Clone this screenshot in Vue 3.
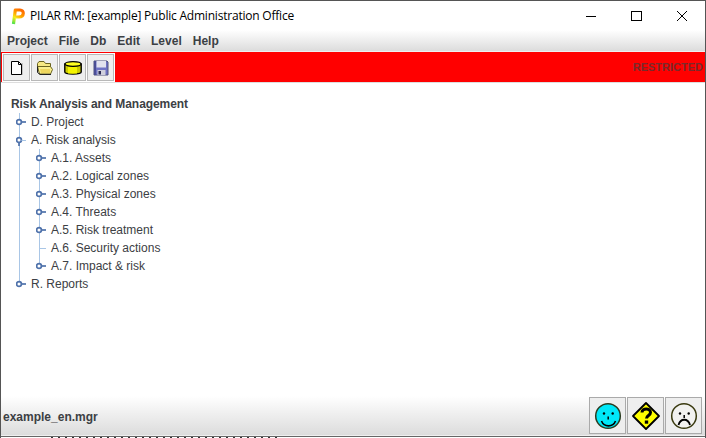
<script setup>
const assets = [
  { label: 'A.1. Assets', handle: true },
  { label: 'A.2. Logical zones', handle: true },
  { label: 'A.3. Physical zones', handle: true },
  { label: 'A.4. Threats', handle: true },
  { label: 'A.5. Risk treatment', handle: true },
  { label: 'A.6. Security actions', handle: false },
  { label: 'A.7. Impact & risk', handle: true }
]
const menus = ['Project', 'File', 'Db', 'Edit', 'Level', 'Help']
</script>

<template>
  <div class="window">
    <header class="titlebar">
      <svg class="logo" width="16" height="18" viewBox="0 0 16 18">
        <defs>
          <linearGradient id="pg" gradientUnits="userSpaceOnUse" x1="11" y1="3" x2="3" y2="17">
            <stop offset="0" stop-color="#ff6a00" />
            <stop offset="0.35" stop-color="#ffa800" />
            <stop offset="0.6" stop-color="#f4ec1c" />
            <stop offset="1" stop-color="#40e050" />
          </linearGradient>
        </defs>
        <path d="M3.500 17 L5.300 3 L10 3 C14.500 3 14.500 10 9 10 L6 10" fill="none" stroke="url(#pg)" stroke-width="3.200" stroke-linejoin="round" />
      </svg>
      <span class="title">PILAR RM: [example] Public Administration Office</span>
      <div class="controls">
        <svg width="46" height="30" viewBox="0 0 46 30"><path d="M19 15.500h10" stroke="#000" fill="none" /></svg>
        <svg width="46" height="30" viewBox="0 0 46 30"><rect x="18.500" y="10.500" width="10" height="9" stroke="#000" fill="none" /></svg>
        <svg width="46" height="30" viewBox="0 0 46 30"><path d="M18 10 L28 20 M28 10 L18 20" stroke="#000" fill="none" /></svg>
      </div>
    </header>

    <nav class="menubar">
      <span v-for="m in menus" :key="m" class="menu">{{ m }}</span>
    </nav>

    <div class="toolbar">
      <div class="tools">
        <button class="tool">
          <svg width="16" height="18" viewBox="0 0 16 18">
            <path d="M4 4h10v12H4z" fill="#c4c4c4" />
            <path d="M2.500 2.500h7l3 3v10h-10z" fill="#fff" stroke="#000" />
            <path d="M9.500 2.500v3h3" fill="none" stroke="#000" />
          </svg>
        </button>
        <button class="tool">
          <svg width="18" height="16" viewBox="0 0 18 16">
            <path d="M1.500 3.500l1.500-2h5l1.500 2h5v4h-13z" fill="#f6e884" stroke="#6a6420" />
            <path d="M1.500 6.500h13l2 3-2 4.500h-11z" fill="#f9ee8c" stroke="#6a6420" />
            <path d="M4 9h10v4H5z" fill="#eed65e" />
            <path d="M1.500 6.500v6l2.500 2h11" fill="none" stroke="#222" />
          </svg>
        </button>
        <button class="tool">
          <svg width="18" height="14" viewBox="0 0 18 14">
            <path d="M.800 3v8c0 1 3 2 8.200 2s8.200-1 8.200-2V3z" fill="#cccc00" stroke="#000" stroke-width="1.400" />
            <path d="M4 6v6.500l5 .300 4-.300V6z" fill="#f4f400" />
            <ellipse cx="9" cy="3" rx="8" ry="2.300" fill="#ffff20" stroke="#000" stroke-width="1.200" />
          </svg>
        </button>
        <button class="tool">
          <svg width="16" height="16" viewBox="0 0 16 16">
            <path d="M1 1h13l1 1v13H1z" fill="#6f72c4" stroke="#50527e" />
            <path d="M1 1h2v14H1z" fill="#4b4e94" />
            <rect x="3.500" y="1" width="9.500" height="6.500" fill="#e2e2ee" />
            <rect x="4.500" y="10" width="8" height="5" fill="#cfcfdc" />
            <rect x="5.500" y="11" width="2.500" height="3.500" fill="#2b2b55" />
          </svg>
        </button>
      </div>
      <span class="restricted">RESTRICTED</span>
    </div>

    <main class="tree">
      <div class="row root">Risk Analysis and Management</div>
      <div class="branch outer">
        <div class="row">
          <svg class="handle" width="10" height="8" viewBox="0 0 10 8"><circle cx="3" cy="4" r="2.400" fill="#fff" stroke="#4f72ab" stroke-width="1.700" /><path d="M5.500 4H10" stroke="#4f72ab" stroke-width="1.700" /></svg>
          D. Project
        </div>
        <div class="row">
          <svg class="handle" width="10" height="12" viewBox="0 0 10 12"><circle cx="3" cy="6" r="2.400" fill="#fff" stroke="#4f72ab" stroke-width="1.700" /><path d="M3 8.500V12" stroke="#4f72ab" stroke-width="1.700" /><path d="M5.500 6.500H10" stroke="#a9c6e6" /></svg>
          A. Risk analysis
        </div>
        <div class="branch inner">
          <div v-for="a in assets" :key="a.label" class="row">
            <svg v-if="a.handle" class="handle" width="10" height="8" viewBox="0 0 10 8"><circle cx="3" cy="4" r="2.400" fill="#fff" stroke="#4f72ab" stroke-width="1.700" /><path d="M5.500 4H10" stroke="#4f72ab" stroke-width="1.700" /></svg>
            <svg v-else class="handle" width="10" height="8" viewBox="0 0 10 8"><path d="M3 4.500h7" stroke="#a9c6e6" /></svg>
            {{ a.label }}
          </div>
        </div>
        <div class="row">
          <svg class="handle" width="10" height="8" viewBox="0 0 10 8"><circle cx="3" cy="4" r="2.400" fill="#fff" stroke="#4f72ab" stroke-width="1.700" /><path d="M5.500 4H10" stroke="#4f72ab" stroke-width="1.700" /></svg>
          R. Reports
        </div>
      </div>
    </main>

    <footer class="statusbar">
      <span class="file">example_en.mgr</span>
      <div class="faces">
        <button class="face">
          <svg width="30" height="30" viewBox="0 0 30 30">
            <circle cx="15" cy="15" r="12.300" fill="#00e8f8" stroke="#2c3c20" stroke-width="1.500" />
            <circle cx="11" cy="12.500" r="1.200" fill="#000" />
            <circle cx="19.700" cy="12.500" r="1.200" fill="#000" />
            <path d="M15.200 15.500v3" stroke="#000" stroke-width="1.500" />
            <path d="M8.500 20c2.500 6.500 11.500 6.500 14 0" fill="none" stroke="#000" stroke-width="1.600" />
          </svg>
        </button>
        <button class="face">
          <svg width="30" height="30" viewBox="0 0 30 30">
            <path d="M15 2 L28 15 L15 28 L2 15 Z" fill="#ffff00" stroke="#000" stroke-width="1.800" stroke-linejoin="round" />
            <path d="M11 11.500c0-4.800 8.500-4.800 8.500 0c0 3-4 3-4 6" fill="none" stroke="#000" stroke-width="3" />
            <rect x="13.800" y="19.500" width="3.400" height="3.200" fill="#000" />
          </svg>
        </button>
        <button class="face">
          <svg width="30" height="30" viewBox="0 0 30 30">
            <circle cx="15" cy="15" r="12.300" fill="#f2f2f0" stroke="#3a3a10" stroke-width="1.500" />
            <circle cx="11" cy="12.500" r="1.200" fill="#000" />
            <circle cx="19.700" cy="12.500" r="1.200" fill="#000" />
            <path d="M15.200 14v3" stroke="#000" stroke-width="1.500" />
            <path d="M9.500 24c2-7 9.500-7 11.500 0" fill="none" stroke="#000" stroke-width="1.800" />
          </svg>
        </button>
      </div>
    </footer>
    <div class="edge"></div>
    <div class="specks"></div>
  </div>
</template>

<style>
html, body { margin: 0; background: #fff; }
</style>

<style scoped>
.window {
  width: 706px;
  height: 438px;
  box-sizing: border-box;
  display: flex;
  flex-direction: column;
  border: 1px solid #555;
  border-bottom: 0;
  background: #fff;
  font-family: "Liberation Sans", Arial, sans-serif;
  color: #3c4044;
  overflow: hidden;
}
.titlebar {
  height: 29px;
  flex: none;
  display: flex;
  align-items: center;
  padding-left: 9px;
  background: #fff;
}
.logo { flex: none; margin-right: 4px; }
.title {
  font-family: "Open Sans", sans-serif;
  font-size: 12px;
  letter-spacing: -0.21px;
  color: #000;
  white-space: nowrap;
}
.controls { margin-left: auto; display: flex; }
.controls svg { display: block; width: 46px; }
.menubar {
  height: 22px;
  flex: none;
  box-sizing: border-box;
  display: flex;
  align-items: center;
  gap: 11px;
  padding-left: 6px;
  background: linear-gradient(#ffffff, #dcdcdc);
  border-bottom: 1px solid #eee;
}
.menu { font-size: 12px; font-weight: bold; color: #3c4044; }
.toolbar {
  height: 30px;
  flex: none;
  display: flex;
  justify-content: space-between;
  background: #ff0000;
  border-bottom: 1px solid #ddd;
  box-sizing: content-box;
}
.tools {
  display: flex;
  align-self: flex-end;
  background: #fff;
  padding: 1px;
  gap: 1px;
  margin-left: 1px;
}
.tool {
  width: 27px;
  height: 27px;
  padding: 0;
  border: 1px solid #b8b8b8;
  background: #eee;
  display: flex;
  align-items: center;
  justify-content: center;
}
.restricted {
  align-self: center;
  font-size: 11px;
  font-weight: bold;
  color: #7a2a2a;
  padding-right: 2px;
}
.tree { flex: 1; min-height: 0; padding: 12px 0 0 10px; font-size: 12px; }
.row { height: 18px; display: flex; align-items: center; white-space: nowrap; color: #3c4044; }
.root { font-weight: bold; letter-spacing: -0.07px; }
.branch { position: relative; }
.outer::before { content: ""; position: absolute; left: 8px; top: 0; height: 168px; width: 1px; background: #a9c6e6; }
.inner { padding-left: 20px; }
.inner::before { content: ""; position: absolute; left: 28px; top: 0; height: 117px; width: 1px; background: #a9c6e6; }
.handle { flex: none; margin: 0 5px; position: relative; z-index: 1; }
.statusbar {
  height: 40px;
  flex: none;
  box-sizing: border-box;
  display: flex;
  align-items: center;
  justify-content: space-between;
  background: linear-gradient(#ffffff, #dcdcdc);
  border-bottom: 1px solid #efefef;
  padding: 0 3px 0 2px;
}
.file { font-size: 12px; font-weight: bold; color: #3c4044; margin-top: 2px; }
.faces { display: flex; gap: 1px; }
.face {
  width: 37px;
  height: 37px;
  padding: 0;
  border: 1px solid #aaa;
  background: #eee;
  display: flex;
  align-items: center;
  justify-content: center;
}
.edge { height: 1px; flex: none; background: #666; }
.specks {
  height: 1px;
  width: 230px;
  flex: none;
  margin-left: 50px;
  background: repeating-linear-gradient(90deg, #333 0 2px, transparent 2px 7px);
}
</style>
